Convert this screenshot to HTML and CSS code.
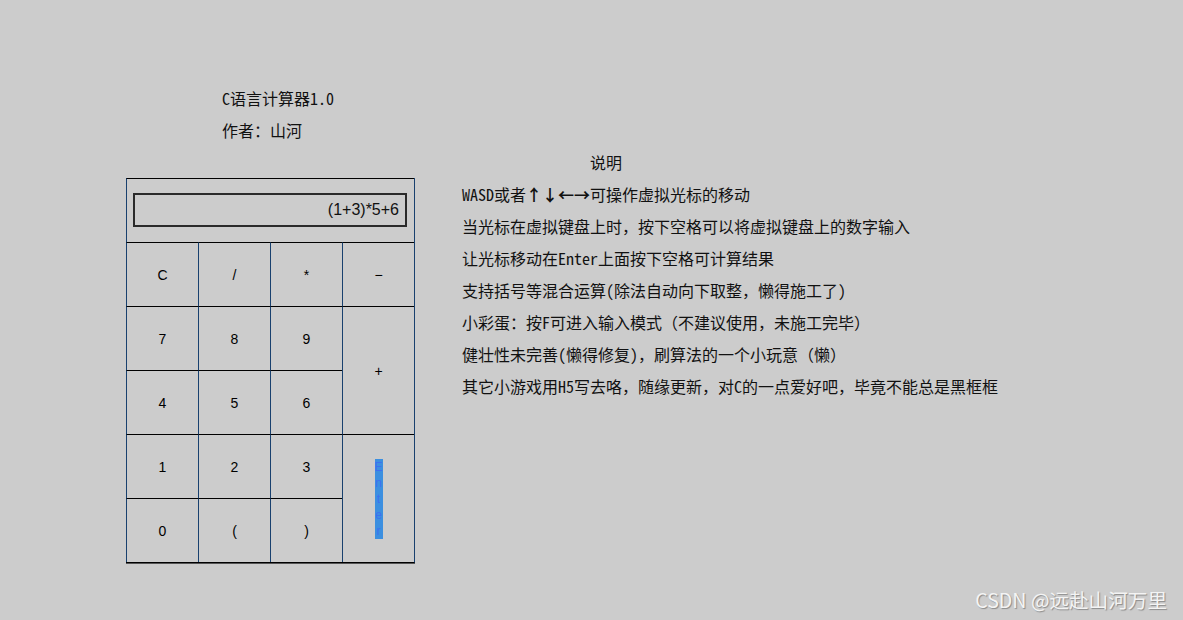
FILE: index.html
```html
<!DOCTYPE html>
<html lang="zh-CN">
<head>
<meta charset="utf-8">
<title>C语言计算器1.0</title>
<link rel="stylesheet" href="styles.css">
</head>
<body>
<div class="page">
  <div class="left">
    <div class="titles">
      <div class="line">C语言计算器1.0</div>
      <div class="line">作者：山河</div>
    </div>
    <div class="calc">
      <div class="cell display"><div class="screen">(1+3)*5+6</div></div>
      <div class="cell key">C</div>
      <div class="cell key">/</div>
      <div class="cell key">*</div>
      <div class="cell key">−</div>
      <div class="cell key">7</div>
      <div class="cell key">8</div>
      <div class="cell key">9</div>
      <div class="cell key tall">+</div>
      <div class="cell key">4</div>
      <div class="cell key">5</div>
      <div class="cell key">6</div>
      <div class="cell key">1</div>
      <div class="cell key">2</div>
      <div class="cell key">3</div>
      <div class="cell key tall"><span class="enter">Enter</span></div>
      <div class="cell key">0</div>
      <div class="cell key">(</div>
      <div class="cell key">)</div>
    </div>
  </div>
  <div class="notes">
    <div class="line heading">说明</div>
    <div class="line">WASD或者<b class="arrows">↑↓←→</b>可操作虚拟光标的移动</div>
    <div class="line">当光标在虚拟键盘上时，按下空格可以将虚拟键盘上的数字输入</div>
    <div class="line">让光标移动在Enter上面按下空格可计算结果</div>
    <div class="line">支持括号等混合运算(除法自动向下取整，懒得施工了)</div>
    <div class="line">小彩蛋：按F可进入输入模式（不建议使用，未施工完毕）</div>
    <div class="line">健壮性未完善(懒得修复)，刷算法的一个小玩意（懒）</div>
    <div class="line">其它小游戏用H5写去咯，随缘更新，对C的一点爱好吧，毕竟不能总是黑框框</div>
  </div>
</div>
<div class="watermark">CSDN @远赴山河万里</div>
</body>
</html>
```
FILE: styles.css
```css
html, body {
  margin: 0;
  padding: 0;
  background: #cccccc;
}
body {
  width: 1183px;
  height: 620px;
  position: relative;
  overflow: hidden;
  font-family: "Noto Sans Mono CJK SC", "Noto Sans CJK SC", monospace;
  font-size: 16px;
  color: #111;
}
.page {
  display: flex;
  align-items: flex-start;
  padding: 82px 0 0 126px;
  gap: 47px;
}
.line {
  height: 32px;
  line-height: 32px;
  white-space: nowrap;
}
.titles {
  padding-left: 96px;
  margin-bottom: 32px;
}
.calc {
  display: grid;
  grid-template-columns: repeat(4, 72px);
  grid-template-rows: repeat(6, 64px);
  border-right: 1px solid #18406e;
  border-bottom: 1px solid #000;
  box-shadow: 0 1px 0 #555;
}
.cell {
  border-top: 1px solid #000;
  border-left: 1px solid #18406e;
}
.display {
  grid-column: 1 / span 4;
  padding: 14px 0 0 6px;
}
.screen {
  height: 30px;
  border: 2px solid #2a2a2a;
  font-family: "Liberation Sans", Arial, sans-serif;
  font-size: 16px;
  line-height: 30px;
  text-align: right;
  padding-right: 6px;
  box-sizing: content-box;
  width: 264px;
}
.key {
  display: flex;
  align-items: center;
  justify-content: center;
  font-family: "Liberation Sans", Arial, sans-serif;
  font-size: 14px;
  color: #000;
}
.tall {
  grid-row: span 2;
}
.enter {
  display: block;
  width: 8px;
  background: #3b8fe0;
  color: #3d6ff0;
  font-size: 12px;
  line-height: 16px;
  text-align: center;
  word-break: break-all;
}
.notes {
  margin-top: 64px;
}
.heading {
  padding-left: 128px;
}
.arrows {
  font-weight: bold;
}
.watermark {
  position: absolute;
  right: 16px;
  bottom: 8px;
  font-family: "Noto Sans CJK SC", "Liberation Sans", sans-serif;
  font-size: 19.6px;
  line-height: 24px;
  color: #f4f4f4;
  text-shadow: 1px 1px 1px #8a8a8a;
}
```
